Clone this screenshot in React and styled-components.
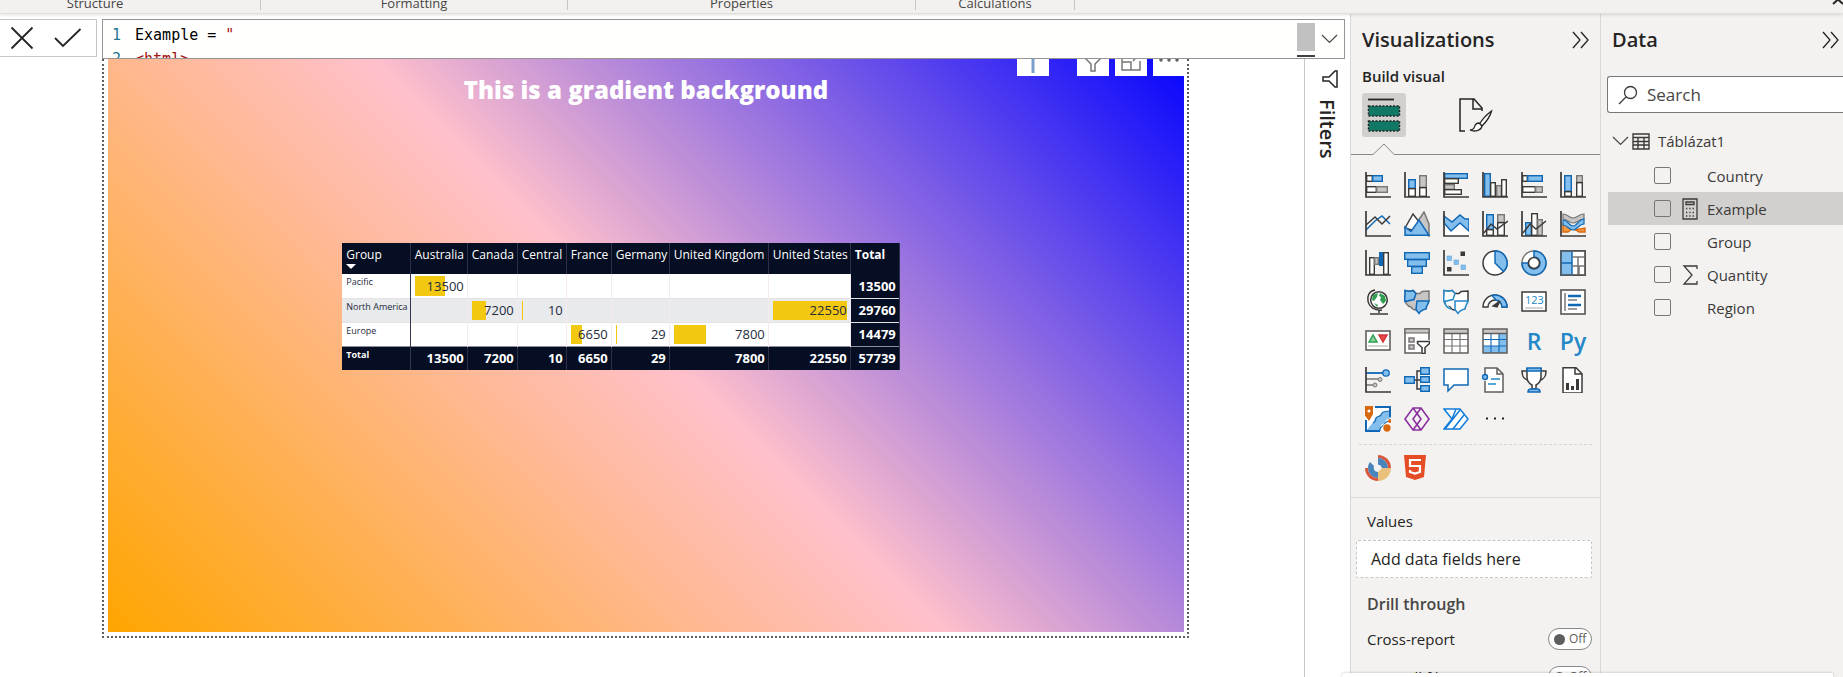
import React from "react";
import styled, { createGlobalStyle, css } from "styled-components";

const C = {
  dark: "#3b3a39",
  blue: "#83beec",
  line: "#1068b5",
  gray: "#c8c6c4",
  grayLine: "#797775",
  panel: "#f3f2f1",
  text: "#252423",
};

const Global = createGlobalStyle`
  * { box-sizing: border-box; }
  body {
    margin: 0;
    background: #fff;
    color: ${C.text};
    font-family: "Open Sans", "Noto Sans", sans-serif;
    font-size: 15px;
    line-height: 20px;
    overflow: hidden;
  }
  button { font: inherit; color: inherit; border: 0; padding: 0; background: none; cursor: pointer; }
  svg { display: block; flex: none; }
  h1, h2, h3, p { margin: 0; }
`;

/* ---------- page frame ---------- */

const Page = styled.div`
  height: 100vh;
  display: flex;
  flex-direction: column;
  position: relative;
`;

const Ribbon = styled.header`
  display: flex;
  align-items: flex-end;
  height: 14px;
  flex: none;
  background: #f2f1f0;
  border-bottom: 1px solid #e1dfdd;
  box-shadow: 0 1px 3px rgba(0, 0, 0, 0.12);
  position: relative;
  overflow: visible;
  z-index: 2;
`;

const RibbonGroup = styled.div`
  width: ${(p) => p.$width}px;
  height: 10px;
  margin-bottom: 3px;
  padding-right: ${(p) => p.$tail || 0}px;
  border-right: 1px solid #c8c6c4;
  display: flex;
  align-items: flex-end;
  justify-content: center;
  font-size: 13px;
  line-height: 14px;
  color: #484644;
`;

const RibbonClose = styled.button`
  margin-left: auto;
  height: 14px;
  display: flex;
  overflow: hidden;
`;

const Body = styled.div`
  flex: 1;
  min-height: 0;
  display: flex;
`;

const Workspace = styled.main`
  flex: 1;
  min-width: 0;
  display: flex;
  flex-direction: column;
`;

/* ---------- formula bar ---------- */

const FormulaRow = styled.div`
  display: flex;
  align-items: flex-start;
  gap: 5px;
  padding: 5px 5px 0 0;
`;

const FormulaActions = styled.div`
  width: 97px;
  height: 38px;
  border: 1px solid #c8c6c4;
  border-left: 0;
  display: flex;
  align-items: center;
  gap: 20px;
  padding-left: 10px;
`;

const FormulaEditor = styled.div`
  flex: 1;
  height: 40px;
  border: 1px solid #979593;
  background: #fffffe;
  display: flex;
  overflow: hidden;
`;

const Code = styled.div`
  flex: 1;
  padding: 3px 0 0 9px;
  font-family: "DejaVu Sans Mono", "Liberation Mono", monospace;
  font-size: 15px;
  line-height: 24px;
  color: #000;
`;

const CodeLine = styled.div`
  display: flex;
  gap: 14px;
  white-space: pre;
`;

const LineNo = styled.span`
  color: #237893;
`;

const Str = styled.span`
  color: #a31515;
`;

const Scroller = styled.div`
  width: 18px;
  padding-top: 3px;
  display: flex;
  flex-direction: column;
  gap: 4px;
`;

const Thumb = styled.div`
  height: 28px;
  background: #c1c1c1;
`;

const Marker = styled.div`
  height: 2px;
  background: #424242;
`;

const Expand = styled.button`
  width: 29px;
  display: flex;
  justify-content: center;
  align-items: center;
`;

/* ---------- report canvas ---------- */

const Stage = styled.div`
  flex: 1;
  min-height: 0;
  display: flex;
`;

const CanvasArea = styled.div`
  flex: 1;
  min-width: 0;
  padding: 0 115px 39px 102px;
  display: flex;
`;

const Visual = styled.section`
  flex: 1;
  min-width: 0;
  border: 2px dotted #605e5c;
  border-top: 0;
  padding: 0 3px 4px 4px;
  display: flex;
  position: relative;
  overflow: hidden;
`;

const Gradient = styled.div`
  flex: 1;
  display: flex;
  flex-direction: column;
  align-items: center;
  padding-top: 15px;
  background: linear-gradient(45deg, orange, pink, blue) bottom / 100% calc(100% + 20px) no-repeat;
`;

const Title = styled.h1`
  font-size: 24px;
  line-height: 32px;
  font-weight: 800;
  color: #fff;
  margin-bottom: 137px;
`;

const VisualHeader = styled.div`
  position: absolute;
  top: -15px;
  right: 2px;
  display: flex;
  gap: 6px;
`;

const HeaderButton = styled.button`
  width: 32px;
  height: 32px;
  background: #fff;
  display: flex;
  align-items: center;
  justify-content: center;
  margin-right: ${(p) => p.$after || 0}px;
`;

const Matrix = styled.table`
  width: 557px;
  margin-right: 50px;
  table-layout: fixed;
  border-collapse: collapse;
  background: #fff;
  font-size: 13px;
  line-height: 18px;
`;

const cellLine = css`
  border-right: 1px solid ${(p) => (p.$dark ? "#31304a" : "#f5eaf0")};
`;

const HeadCell = styled.th`
  height: 31px;
  padding: 3px 4px 0;
  vertical-align: top;
  text-align: left;
  font-size: 12px;
  line-height: 18px;
  font-weight: ${(p) => (p.$bold ? 700 : 500)};
  color: #fff;
  background: #050e23;
  white-space: nowrap;
  border-right: 1px solid #31304a;
`;

const SortArrow = styled.span`
  display: block;
  width: 0;
  border: 5px solid transparent;
  border-top-color: #fff;
  border-bottom: 0;
`;

const RowHead = styled.th`
  height: 24px;
  padding: 0 4px;
  vertical-align: top;
  text-align: left;
  font-size: 9px;
  line-height: 16px;
  font-weight: ${(p) => (p.$dark ? 700 : 400)};
  color: ${(p) => (p.$dark ? "#fff" : "#252a3d")};
  background: ${(p) => (p.$dark ? "#050e23" : "transparent")};
  border-right: 1px solid #31384e;
  white-space: nowrap;
`;

const Row = styled.tr`
  background: ${(p) => (p.$band ? "#e9eaec" : "#fff")};
  border-bottom: 1px solid ${(p) => (p.$last ? "#8d8c9a" : "#e6e1e4")};
`;

const Cell = styled.td`
  position: relative;
  height: 24px;
  padding: 0 3px;
  text-align: right;
  font-weight: ${(p) => (p.$dark ? 700 : 400)};
  color: ${(p) => (p.$dark ? "#fff" : "#252a3d")};
  background: ${(p) => (p.$dark ? "#050e23" : "transparent")};
  ${cellLine}
`;

const Bar = styled.span`
  position: absolute;
  left: 4px;
  top: 2px;
  bottom: 2px;
  background: #f2c811;
`;

const Num = styled.span`
  position: relative;
`;

/* ---------- filters strip ---------- */

const FiltersStrip = styled.aside`
  width: 46px;
  border-left: 1px solid #c8c6c4;
  padding: 11px 0 0 5px;
  display: flex;
  flex-direction: column;
  align-items: center;
  gap: 11px;
`;

const FiltersLabel = styled.h2`
  writing-mode: vertical-rl;
  font-size: 20px;
  line-height: 24px;
  font-weight: 600;
  padding-right: 6px;
`;

/* ---------- side panes ---------- */

const Pane = styled.aside`
  width: ${(p) => p.$width}px;
  background: ${C.panel};
  border-left: 1px solid #dad8d6;
  display: flex;
  flex-direction: column;
  overflow: hidden;
  & > * { flex-shrink: 0; }
`;

const PaneHeader = styled.div`
  display: flex;
  justify-content: space-between;
  align-items: center;
  height: 28px;
  margin: 12px ${(p) => p.$right}px 0 11px;
`;

const PaneTitle = styled.h2`
  font-size: 20px;
  line-height: 28px;
  font-weight: 600;
`;

const BuildLabel = styled.h3`
  margin: 12px 0 7px 11px;
  font-size: 15px;
  line-height: 20px;
  font-weight: 600;
`;

const Tabs = styled.div`
  display: flex;
  gap: 48px;
  padding-left: 11px;
`;

const Tab = styled.button`
  width: 44px;
  height: 44px;
  border-radius: 3px;
  background: ${(p) => (p.$active ? "#d2d0ce" : "transparent")};
  display: flex;
  align-items: center;
  justify-content: center;
`;

const Notch = styled.div`
  display: flex;
  align-items: flex-end;
  height: 18px;
  &::before, &::after { content: ""; height: 1px; background: #8a8886; }
  &::before { width: 21px; }
  &::after { flex: 1; }
`;

const IconGrid = styled.div`
  display: grid;
  grid-template-columns: repeat(6, 26px);
  grid-auto-rows: 26px;
  gap: 13px;
  margin: ${(p) => p.$top}px 0 0 14px;
`;

const VisualButton = styled.button`
  width: 26px;
  height: 26px;
  display: flex;
  align-items: center;
  justify-content: center;
`;

const Letters = styled.span`
  font-size: 23px;
  line-height: 26px;
  font-weight: 600;
  color: #2488c8;
`;

const Dashes = styled.hr`
  width: calc(100% - 16px);
  margin: 12px 8px 0;
  border: 0;
  border-top: 1px dashed #d8d6d4;
`;

const Rule = styled.hr`
  width: 100%;
  margin: 16px 0 0;
  border: 0;
  border-top: 1px solid #dad8d6;
`;

const FieldLabel = styled.h3`
  margin: ${(p) => p.$top}px 0 0 16px;
  font-size: ${(p) => (p.$strong ? 16 : 15)}px;
  line-height: 20px;
  font-weight: ${(p) => (p.$strong ? 600 : 400)};
  color: ${(p) => (p.$strong ? "#484644" : C.text)};
`;

const DropWell = styled.div`
  margin: 9px 8px 0 5px;
  height: 38px;
  padding: 0 14px;
  border: 1px dashed #c8c6c4;
  border-radius: 2px;
  background: #fff;
  font-size: 16px;
  line-height: 36px;
`;

const SwitchRow = styled.label`
  display: flex;
  justify-content: space-between;
  align-items: center;
  height: 22px;
  margin: ${(p) => p.$top}px 8px 0 16px;
`;

const SwitchBox = styled.span`
  position: relative;
  display: flex;
  align-items: center;
  gap: 4px;
  width: 44px;
  height: 22px;
  padding-left: 5px;
  border: 1px solid #8a8886;
  border-radius: 11px;
  background: #fff;
  font-size: 12px;
  color: #605e5c;
  &::before { content: ""; width: 11px; height: 11px; border-radius: 50%; background: #605e5c; }
`;

const HiddenCheck = styled.input`
  position: absolute;
  inset: 0;
  margin: 0;
  opacity: 0;
`;

/* ---------- data pane ---------- */

const SearchBox = styled.label`
  display: flex;
  align-items: center;
  gap: 9px;
  height: 37px;
  margin: 22px 0 0 6px;
  padding-left: 10px;
  border: 1px solid #797775;
  border-right: 0;
  border-radius: 3px 0 0 3px;
  background: #fff;
`;

const SearchInput = styled.input`
  flex: 1;
  min-width: 0;
  border: 0;
  outline: 0;
  padding: 0;
  background: none;
  font: 400 17px/24px "Open Sans", "Noto Sans", sans-serif;
  &::placeholder { color: #484644; opacity: 1; }
`;

const TableRow = styled.button`
  display: flex;
  align-items: center;
  gap: 3px;
  height: 24px;
  margin: 16px 0 6px 11px;
  color: #3b3a39;
`;

const TableName = styled.span`
  margin-left: 5px;
`;

const FieldRow = styled.label`
  display: flex;
  align-items: center;
  height: 33px;
  margin-left: 7px;
  padding-left: 46px;
  background: ${(p) => (p.$selected ? "#d2d0ce" : "transparent")};
  color: #3b3a39;
`;

const FieldCheck = styled.input`
  appearance: none;
  width: 17px;
  height: 17px;
  margin: 0;
  border: 1px solid #797775;
  border-radius: 2px;
  background: transparent;
`;

const FieldIcon = styled.span`
  width: 36px;
  padding-left: 11px;
`;

const BottomEdge = styled.div`
  position: absolute;
  right: 10px;
  bottom: 0;
  width: 491px;
  height: 4px;
  background: #fff;
  border-radius: 3px 0 0 0;
  box-shadow: 0 0 3px rgba(0, 0, 0, 0.25);
`;

/* ---------- drawings ---------- */

const Svg = ({ w = 26, h = 26, children, ...rest }) => (
  <svg width={w} height={h} viewBox={`0 0 ${w} ${h}`} fill="none" aria-hidden="true" {...rest}>
    {children}
  </svg>
);

const shades = {
  w: { fill: "#fff", stroke: C.dark },
  b: { fill: C.blue, stroke: C.line },
  g: { fill: C.gray, stroke: C.grayLine },
};

const R = ({ k, x, y, x2, y2 }) => (
  <rect x={x + 0.7} y={y + 0.7} width={x2 - x - 0.4} height={y2 - y - 0.4} strokeWidth="1.4" {...shades[k]} />
);

const Axis = () => <path d="M1 0v25h25" stroke={C.dark} strokeWidth="1.7" />;
const chart = (rects, extra) => (
  <Svg>
    {rects.map(([k, x, y, x2, y2], i) => (
      <R key={i} k={k} x={x} y={y} x2={x2} y2={y2} />
    ))}
    {extra}
    <Axis />
  </Svg>
);
const P = (d, s = C.dark, f = "none", sw = 1.5) => <path d={d} stroke={s} fill={f} strokeWidth={sw} />;

const stateShape = "M1 1.5c3 1 5 1.200 8 0l3 3h4l2-2 7-.5v9c-1 4-3 5-3 8-3 .5-5 1-7 4.500-1-1-1-2-3-2.500-3 0-4-1-5-3-4-1-6-5-6-9 .5-3 .5-5 0-8z";

const visuals = [
  ["Stacked bar chart", chart([["w", 1, 3, 7, 9], ["b", 7, 3, 17, 9], ["w", 1, 14, 11, 20], ["g", 11, 14, 22, 20]])],
  ["Stacked column chart", chart([["b", 4, 7, 11, 16], ["w", 4, 16, 11, 24], ["g", 15, 3, 22, 15], ["w", 15, 15, 22, 24]])],
  ["Clustered bar chart", chart([["b", 1, 1, 24, 6], ["w", 1, 6, 15, 11], ["g", 1, 12, 11, 17], ["w", 1, 17, 18, 22]])],
  ["Clustered column chart", chart([["b", 2, 1, 8, 24], ["w", 8, 10, 13, 24], ["g", 14, 13, 19, 24], ["w", 19, 7, 24, 24]])],
  ["100% stacked bar chart", chart([["w", 1, 3, 6, 9], ["b", 6, 3, 21, 9], ["w", 1, 14, 14, 20], ["g", 14, 14, 21, 20]])],
  ["100% stacked column chart", chart([["b", 4, 3, 11, 19], ["w", 4, 19, 11, 24], ["g", 16, 3, 22, 10], ["w", 16, 10, 22, 24]])],
  ["Line chart", chart([], <>{P("M1 19l9-9 7-5 8 8", C.line)}{P("M1 14l9-8 7 7 8-8")}</>)],
  ["Area chart", <Svg>{P("M1 17L9 3l7 9-5 8z", C.dark, "#fff")}{P("M14 10l6-9 5 12v12z", C.grayLine, C.gray)}{P("M1 16l6 4.500L15 9l10 15.300H1z", C.line, C.blue)}</Svg>],
  ["Stacked area chart", chart([], <>{P("M1 12l7 8 9-8 9 8v5H1z", "none", "#fff")}{P("M1 5l8 6 8-7 5 4h4v12l-9-8-9 8-7-8z", C.line, C.blue)}</>)],
  ["Line and stacked column chart", chart([["b", 4, 3, 11, 18], ["w", 4, 18, 11, 24], ["g", 15, 3, 22, 11], ["w", 15, 11, 22, 24]], P("M2 22l7-9 6 5 11-8"))],
  ["Line and clustered column chart", chart([["b", 4, 11, 10, 24], ["w", 10, 2, 16, 24], ["g", 16, 8, 21, 24]], P("M2 22l7-9 6 5 10-8"))],
  ["Ribbon chart", chart([], <>
    {P("M3 13h5l7 6 10-2v4h-6l-6-4-5 4H3z", "#d8680c", "#f59b45", 1.4)}
    {P("M3 3c5 0 6 4 10 4s6-4 11-4v5c-5 0-7 4-11 4S7 8 3 8z", C.grayLine, C.gray, 1.2)}
    {P("M3 9c5 0 6 6 10 6s6-7 11-7v5c-5 0-7 6-11 6S7 14 3 14z", C.line, C.blue, 1.2)}
  </>)],
  ["Waterfall chart", chart([["w", 4, 7, 9, 24], ["g", 9, 7, 13, 14], ["w", 18, 2, 23, 24]], <rect x="14" y="2" width="4" height="14" fill={C.line} />)],
  ["Funnel", <Svg><R k="b" x={0} y={2} x2={25} y2={9} /><R k="b" x={3} y={9} x2={22} y2={16} /><R k="b" x={7} y={16} x2={18} y2={23} /></Svg>],
  ["Scatter chart", chart([], <>
    {[[4, 6], [11, 10], [18, 15]].map(([x, y]) => <rect key={x} x={x} y={y} width="4.500" height="4.500" fill={C.blue} stroke="#5da3da" strokeWidth=".6" />)}
    <rect x="17.500" y="1.500" width="4.500" height="4.500" fill={C.dark} /><rect x="4" y="17" width="4.500" height="4.500" fill={C.dark} />
  </>)],
  ["Pie chart", <Svg><circle cx="13" cy="13" r="12" fill="#fff" stroke={C.dark} strokeWidth="1.5" />{P("M13 1a12 12 0 0 1 8.500 20.500L13 13z", C.line, C.blue)}</Svg>],
  ["Donut chart", <Svg><circle cx="13" cy="13" r="12" fill="#fff" stroke={C.grayLine} strokeWidth="1.500" />{P("M13 1a12 12 0 1 1-12 12h6a6 6 0 1 0 6-6z", C.line, C.blue)}<circle cx="13" cy="13" r="5.500" fill="#fff" stroke={C.dark} strokeWidth="1.500" /></Svg>],
  ["Treemap", <Svg><R k="w" x={0} y={0} x2={25} y2={25} />{P("M1 1h11v12H1zM1 13h11v12H1z", C.line, C.blue)}{P("M12 7h13M18 7v9M12 16h13M19 16v9M18 16v9", C.grayLine)}<rect x="1" y="1" width="24" height="24" stroke="#605e5c" strokeWidth="1.500" /></Svg>],
  ["Map", <Svg>
    <circle cx="14" cy="11" r="8.300" fill="#fff" stroke={C.dark} strokeWidth="1.500" />
    {P("M8 6l5-2-1 4-3 4-2-1zM15 4l5 3 1 5-3 3-3-4 1-3-2-1zM9 14l4 2-1 2z", "none", "#2f9e4f")}
    {P("M10 1C4 2 2 7 3 12c1 6 7 10 14 9M14 21v3M5 25h18", C.dark)}
  </Svg>],
  ["Filled map", <Svg>{P(stateShape, C.grayLine, C.gray)}{P("M1 1.500c3 1 5 1.200 8 0l3 3-2 6-9 2c-1-3 .5-7 0-11zM13 12h12c-1 4-3 5-3 8-3 .5-5 1-7 4.500l-3-4z", C.line, C.blue)}</Svg>],
  ["Shape map", <Svg>{P(stateShape, C.dark, "#fff")}{P("M1 1.500c3 1 5 1.200 8 0l3 3-2 6-9 2c-1-3 .5-7 0-11zM12 12h13c-1 4-3 5-3 8-3 .5-5 1-7 4.500l-3-4zM2 13c0 4 3 6 6 7", "#2488c8", "#fff")}</Svg>],
  ["Gauge", <Svg>{P("M1 18a12 12 0 0 1 24 0h-5a7 7 0 0 0-14 0z", C.dark, "#fff")}{P("M10 6.500A12 12 0 0 1 25 18h-5a7 7 0 0 0-6-7z", C.line, C.blue)}{P("M11 17l7-5-3 6z", C.dark, C.dark)}</Svg>],
  ["Card", <Svg><rect x="1" y="3" width="24" height="19" fill="#fff" stroke={C.dark} strokeWidth="1.500" /><text x="4" y="15" fontSize="11" fill="#2488c8" fontFamily="Open Sans">123</text>{P("M4 19h18", C.gray)}</Svg>],
  ["Multi-row card", <Svg><rect x="1" y="1" width="24" height="24" fill="#fff" stroke="#605e5c" strokeWidth="1.700" />{P("M5 4v18", C.grayLine)}{P("M8 7h13M8 16h13", C.line, "none", 2.4)}{P("M8 11h9M8 20h9", C.dark, "none", 1.2)}</Svg>],
  ["KPI", <Svg><rect x="1" y="3" width="24" height="19" fill="#fff" stroke="#605e5c" strokeWidth="1.600" />{P("M4 14l4-7 4 7z", "#2f9e4f", "#8fd0a0")}{P("M14 7h8l-4 7z", "#d13438", "#e8484c")}{P("M3 18h20", C.gray)}</Svg>],
  ["Slicer", <Svg>{P("M17 25H1V1h24v11", "#605e5c", "#fff")}<rect x="1" y="1" width="24" height="4" fill={C.gray} stroke="#605e5c" />{P("M5 10h5v4H5zM5 17h5v4H5z", C.grayLine, C.gray)}{P("M13.500 13.500h12v2l-4.500 4v6h-3v-6l-4.500-4z", C.dark, "#fff")}</Svg>],
  ["Table", <Svg><rect x="1" y="1" width="24" height="24" fill="#fff" />{P("M1 11.500h24M1 18h24M9 5v20M17 5v20", C.grayLine, "none", 1.2)}<rect x="1" y="1" width="24" height="4" fill={C.gray} /><path d="M1 1h24v24H1zM1 5.500h24" stroke="#605e5c" strokeWidth="1.500" /></Svg>],
  ["Matrix", <Svg><rect x="1" y="1" width="24" height="24" fill="#fff" /><path d="M17 5h8v20H1v-7h16z" fill={C.blue} /><path d="M1 11.500h24M1 18h24M9 5v20M17 5v20" stroke={C.line} strokeWidth="1.100" /><rect x="1" y="1" width="24" height="4" fill={C.gray} /><path d="M1 1h24v24H1zM1 5.500h24" stroke="#605e5c" strokeWidth="1.500" /></Svg>],
  ["R script visual", <Letters>R</Letters>],
  ["Python visual", <Letters>Py</Letters>],
  ["Key influencers", <Svg>{P("M1 6h17", C.line, "none", 1.8)}{P("M1 12h13M1 18h7", C.grayLine)}<circle cx="21" cy="6" r="3.200" fill={C.blue} stroke={C.line} strokeWidth="1.300" /><circle cx="15" cy="12.500" r="2" stroke={C.grayLine} fill={C.gray} /><circle cx="10" cy="18" r="2" stroke={C.grayLine} fill={C.gray} /><Axis /></Svg>],
  ["Decomposition tree", <Svg>{P("M9 13h8M17 4h-4v18h4", C.dark)}<R k="b" x={0} y={9} x2={10} y2={16} /><R k="b" x={16} y={0} x2={25} y2={7} /><R k="b" x={16} y={9} x2={25} y2={15} /><R k="b" x={16} y={18} x2={25} y2={24} /></Svg>],
  ["Q&A", <Svg>{P("M1 2h24v16H11l-6 6v-6H1z", C.line, "#fff")}</Svg>],
  ["Smart narrative", <Svg>{P("M3 8V1h12l6 6v18H3V14", "#605e5c", "#fff")}{P("M15 1v6h6", "#605e5c")}<circle cx="3" cy="10" r="2.500" fill={C.blue} stroke={C.line} strokeWidth="1.400" />{P("M9 12h9M6 17h8", "#2488c8")}</Svg>],
  ["Goals", <Svg>{P("M6 4H1c0 6 2 8 6 9M20 4h5c0 6-2 8-6 9", C.dark)}{P("M6 2h14v8c0 5-3 7-5 8v4h-4v-4c-2-1-5-3-5-8z", C.dark, "#fff")}{P("M6 1h14v3H6zM7 25c0-2 1-3 3-3h6c2 0 3 1 3 3z", C.line, C.blue)}</Svg>],
  ["Paginated report", <Svg>{P("M3 .800h13l6 6V26H3z", C.dark, "#fff")}{P("M15 1v6h7", C.dark)}<path d="M6 16h3v7H6zM11 19h3v4h-3zM16 12h3v11h-3z" fill={C.dark} /></Svg>],
  ["ArcGIS Maps", <Svg>
    <path d="M1 1h25v24H1z" fill="#fff" />
    <path d="M1 25l8-10c1-3 2-5 6-5 2-1 2-4 5-4l6-1v7l-5 2c-1 4-4 4-5 5l-1 6z" fill={C.blue} />
    {P("M1 14v11h14M10 1h15v10", C.line, "none", 2)}
    {P("M8 17c2-1 3-2 3-5 2-2 5-1 6-5 2-2 4-1 7-2M15 25c-1-4 2-4 4-6 1-3 3-4 6-4", C.line, "none", 1.100)}
    <path d="M-1 0h9v8l-4 7-5-7z" fill="#d8680c" /><circle cx="4" cy="5" r="1.600" fill="#fff" />
    <circle cx="22" cy="22" r="4.500" fill="#fff" /><circle cx="22" cy="22" r="3.700" fill="#d8680c" /><circle cx="25" cy="15" r="2" fill="#d8680c" />
  </Svg>],
  ["Power Apps", <Svg>{P("M9 2h8l8 11-8 11H9L1 13zM9 2l8 11-8 11M17 2L9 13l8 11", "#8b2fa0", "none", 1.600)}</Svg>],
  ["Power Automate", <Svg>{P("M1 3h16l8 10-8 10H1l8-10z", "#0f7bdc", "#fff")}{P("M2 23L17 4M10 23l11-14M9 13L13 3", "#0f7bdc")}</Svg>],
  ["More visuals", <Svg><path d="M4 11.500h2v2H4zM12 11.500h2v2h-2zM20 11.500h2v2h-2z" fill={C.text} /></Svg>],
];

const custom = [
  ["Circular visual", <Svg>
    <path d="M13 0a13 13 0 0 1 13 13h-3A10 10 0 0 0 13 3zM0 13a13 13 0 0 0 13 13v-3A10 10 0 0 1 3 13z" fill="#d9573c" />
    <path d="M13 3a10 10 0 0 1 10 10h-6a5 5 0 0 0-4-3.500zM13 23v-6c-3 0-5-3-4-6l-4-4c-1.500 2-2 4-2 6a10 10 0 0 0 10 10z" fill="#4a84bd" />
    <path d="M26 13a13 13 0 0 1-13 13v-9l4-4z" fill="#e9c17d" />
  </Svg>],
  ["HTML Content", <Svg>
    <path d="M0 0h22l-2 22-9 3-9-3z" fill="#e44d26" />
    <path d="M17 5H6v6h10v6l-5 1.500L6 17v-2" stroke="#fff" strokeWidth="2.200" />
  </Svg>],
];

const Chevrons = () => <Svg w={18} h={18}><path d="M1 1l7 8-7 8M9 1l7 8-7 8" stroke={C.text} strokeWidth="1.300" /></Svg>;
const ChevronDown = () => <Svg w={17} h={10}><path d="M1 1l7.500 7.500L16 1" stroke="#484644" strokeWidth="1.200" /></Svg>;

/* ---------- data ---------- */

const columns = [
  ["Group", 68], ["Australia", 57], ["Canada", 50], ["Central", 49], ["France", 45],
  ["Germany", 58], ["United Kingdom", 99], ["United States", 82], ["Total", 49],
];

const rows = [
  { name: "Pacific", values: [13500, , , , , , ,], total: 13500 },
  { name: "North America", values: [, 7200, 10, , , , 22550], total: 29760 },
  { name: "Europe", values: [, , , 6650, 29, 7800, ,], total: 14479 },
];
const totals = [13500, 7200, 10, 6650, 29, 7800, 22550, 57739];
const barWidths = { 13500: 30, 7200: 14, 10: 1, 6650: 11, 29: 1, 7800: 32, 22550: 74 };

const Calculator = () => (
  <Svg w={16} h={22}>
    <path d="M1 1h14v20H1zM4 4h8v2.500H4z" stroke={C.dark} strokeWidth="1.300" />
    <path d="M4 10.500h9M4 14.500h9M4 18h9" stroke={C.dark} strokeWidth="1.300" strokeDasharray="1.300 2" />
  </Svg>
);
const Sigma = () => <Svg w={16} h={20}><path d="M15 4V1H2l8 9-8 9h13v-3" stroke={C.dark} strokeWidth="1.300" /></Svg>;

const fields = [
  ["Country"], ["Example", <Calculator />, true], ["Group"], ["Quantity", <Sigma />], ["Region"],
];

export default function App() {
  return (
    <Page>
      <Global />
      <Ribbon>
        <RibbonGroup $width={261} $tail={70}>Structure</RibbonGroup>
        <RibbonGroup $width={307}>Formatting</RibbonGroup>
        <RibbonGroup $width={348}>Properties</RibbonGroup>
        <RibbonGroup $width={159}>Calculations</RibbonGroup>
        <RibbonClose aria-label="Close">
          <Svg w={11} h={14}><path d="M1 5l10-9M1-4l10 9" stroke={C.text} strokeWidth="2" /></Svg>
        </RibbonClose>
      </Ribbon>

      <Body>
        <Workspace>
          <FormulaRow>
            <FormulaActions>
              <button aria-label="Cancel"><Svg w={24} h={24}><path d="M1.500 1.500l21 21M22.500 1.500l-21 21" stroke={C.text} strokeWidth="1.800" /></Svg></button>
              <button aria-label="Commit"><Svg w={28} h={20}><path d="M1 10l8 8L26.500 1" stroke={C.text} strokeWidth="1.800" /></Svg></button>
            </FormulaActions>
            <FormulaEditor>
              <Code>
                <CodeLine><LineNo>1</LineNo><span>Example = <Str>"</Str></span></CodeLine>
                <CodeLine><LineNo>2</LineNo><Str>&lt;html&gt;</Str></CodeLine>
              </Code>
              <Scroller><Thumb /><Marker /></Scroller>
              <Expand aria-label="Expand formula bar"><ChevronDown /></Expand>
            </FormulaEditor>
          </FormulaRow>

          <Stage>
            <CanvasArea>
              <Visual>
                <Gradient>
                  <Title>This is a gradient background</Title>
                  <Matrix>
                    <colgroup>{columns.map(([n, w]) => <col key={n} width={w} />)}</colgroup>
                    <thead>
                      <tr>
                        {columns.map(([n], i) => (
                          <HeadCell key={n} $bold={i === 8}>{n}{i === 0 && <SortArrow />}</HeadCell>
                        ))}
                      </tr>
                    </thead>
                    <tbody>
                      {rows.map((r, i) => (
                        <Row key={r.name} $band={i === 1} $last={i === 2}>
                          <RowHead>{r.name}</RowHead>
                          {Array.from(r.values).map((v, j) => (
                            <Cell key={j}>
                              {v !== undefined && <><Bar style={{ width: barWidths[v] }} /><Num>{v}</Num></>}
                            </Cell>
                          ))}
                          <Cell $dark>{r.total}</Cell>
                        </Row>
                      ))}
                      <tr>
                        <RowHead $dark>Total</RowHead>
                        {totals.map((v, j) => <Cell key={j} $dark>{v}</Cell>)}
                      </tr>
                    </tbody>
                  </Matrix>
                </Gradient>
                <VisualHeader>
                  <HeaderButton aria-label="Pin" $after={22}><Svg w={4} h={26}><path d="M2 0v26" stroke="#7aa0cc" strokeWidth="3" /></Svg></HeaderButton>
                  <HeaderButton aria-label="Filters"><Svg w={18} h={24}><path d="M1 8h16v2l-6 6v7H7v-7l-6-6z" stroke="#797775" strokeWidth="1.500" /></Svg></HeaderButton>
                  <HeaderButton aria-label="Focus mode"><Svg w={20} h={22}><path d="M1 4v17h18v-9M1 13h9v8M8 4H1M12 12l7-8M13 4h6v5" stroke="#797775" strokeWidth="1.500" /></Svg></HeaderButton>
                  <HeaderButton aria-label="More options"><Svg w={20} h={4}><circle cx="2" cy="2" r="1.700" fill="#605e5c" /><circle cx="10" cy="2" r="1.700" fill="#605e5c" /><circle cx="18" cy="2" r="1.700" fill="#605e5c" /></Svg></HeaderButton>
                </VisualHeader>
              </Visual>
            </CanvasArea>
            <FiltersStrip>
              <Svg w={16} h={18}><path d="M15 1v16h-2L7 11H1V7h6l6-6z" stroke={C.text} strokeWidth="1.500" /></Svg>
              <FiltersLabel>Filters</FiltersLabel>
            </FiltersStrip>
          </Stage>
        </Workspace>

        <Pane $width={250}>
          <PaneHeader $right={10}>
            <PaneTitle>Visualizations</PaneTitle>
            <button aria-label="Collapse visualizations"><Chevrons /></button>
          </PaneHeader>
          <BuildLabel>Build visual</BuildLabel>
          <Tabs>
            <Tab $active aria-label="Build visual">
              <Svg w={34} h={34}>
                <path d="M1 1.500h26" stroke={C.text} strokeWidth="1.800" />
                <path d="M1.500 8h31v10h-31zM1.500 23h31v10h-31z" fill="#117865" stroke={C.text} strokeWidth="1.500" strokeDasharray="2 1.500" />
              </Svg>
            </Tab>
            <Tab aria-label="Format page">
              <Svg w={34} h={34}>
                <path d="M6 33H1V1h14l8 9v3M14 1v10h9" stroke={C.text} strokeWidth="1.500" />
                <path d="M32.500 13c-4 3-9 8-12 13l2.500 2c4-4 8-9 9.500-15z" fill="#fff" stroke={C.text} strokeWidth="1.300" />
                <path d="M20 25c-4 0-4 3-5 5-1 2-3 2-4 2 4 2 11 1 12-4z" fill="#fff" stroke={C.text} strokeWidth="1.300" />
              </Svg>
            </Tab>
          </Tabs>
          <Notch><Svg w={24} h={12}><path d="M0 11.500h1L12 1l10 10.500h2" stroke="#8a8886" /></Svg></Notch>
          <IconGrid $top={17}>
            {visuals.map(([n, icon]) => <VisualButton key={n} aria-label={n} title={n}>{icon}</VisualButton>)}
          </IconGrid>
          <Dashes />
          <IconGrid $top={10}>
            {custom.map(([n, icon]) => <VisualButton key={n} aria-label={n} title={n}>{icon}</VisualButton>)}
          </IconGrid>
          <Rule />
          <FieldLabel $top={13}>Values</FieldLabel>
          <DropWell>Add data fields here</DropWell>
          <FieldLabel $top={16} $strong>Drill through</FieldLabel>
          <SwitchRow $top={14}>
            Cross-report
            <SwitchBox><HiddenCheck type="checkbox" role="switch" />Off</SwitchBox>
          </SwitchRow>
          <SwitchRow $top={16}>
            Keep all filters
            <SwitchBox><HiddenCheck type="checkbox" role="switch" />Off</SwitchBox>
          </SwitchRow>
        </Pane>

        <Pane $width={243}>
          <PaneHeader $right={3}>
            <PaneTitle>Data</PaneTitle>
            <button aria-label="Collapse data"><Chevrons /></button>
          </PaneHeader>
          <SearchBox>
            <Svg w={20} h={20}><circle cx="12.500" cy="7.500" r="6" stroke={C.dark} strokeWidth="1.300" /><path d="M8 12l-7 7" stroke={C.dark} strokeWidth="1.300" /></Svg>
            <SearchInput placeholder="Search" aria-label="Search" />
          </SearchBox>
          <TableRow>
            <ChevronDown />
            <Svg w={18} h={17}><path d="M1 1h16v15H1zM1 4.500h16M1 8.500h16M1 12h16M6 4v12M12 4v12" stroke={C.dark} strokeWidth="1.400" /></Svg>
            <TableName>Táblázat1</TableName>
          </TableRow>
          {fields.map(([n, icon, selected]) => (
            <FieldRow key={n} $selected={selected}>
              <FieldCheck type="checkbox" />
              <FieldIcon>{icon}</FieldIcon>
              {n}
            </FieldRow>
          ))}
        </Pane>
      </Body>
      <BottomEdge />
    </Page>
  );
}
